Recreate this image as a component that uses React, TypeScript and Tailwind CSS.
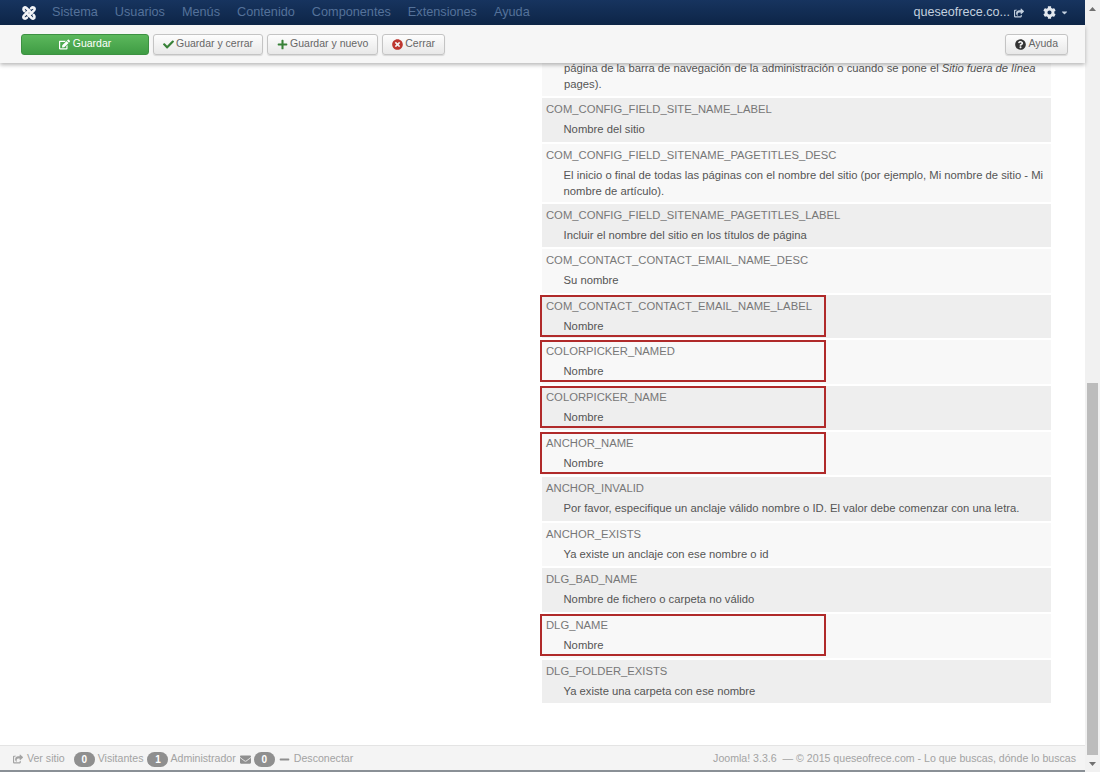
import { FaCaretDown, FaCheck, FaCog, FaEdit, FaEnvelope, FaMinus, FaPlus, FaQuestionCircle, FaShareSquare, FaTimesCircle } from "react-icons/fa";

const menu = ["Sistema", "Usuarios", "Menús", "Contenido", "Componentes", "Extensiones", "Ayuda"];

type Row = { label: string; value: React.ReactNode; marked?: boolean; tall?: boolean };

const rows: Row[] = [
  { label: "COM_CONFIG_FIELD_SITE_NAME_LABEL", value: "Nombre del sitio" },
  {
    label: "COM_CONFIG_FIELD_SITENAME_PAGETITLES_DESC",
    value: "El inicio o final de todas las páginas con el nombre del sitio (por ejemplo, Mi nombre de sitio - Mi nombre de artículo).",
    tall: true,
  },
  { label: "COM_CONFIG_FIELD_SITENAME_PAGETITLES_LABEL", value: "Incluir el nombre del sitio en los títulos de página" },
  { label: "COM_CONTACT_CONTACT_EMAIL_NAME_DESC", value: "Su nombre" },
  { label: "COM_CONTACT_CONTACT_EMAIL_NAME_LABEL", value: "Nombre", marked: true },
  { label: "COLORPICKER_NAMED", value: "Nombre", marked: true },
  { label: "COLORPICKER_NAME", value: "Nombre", marked: true },
  { label: "ANCHOR_NAME", value: "Nombre", marked: true },
  { label: "ANCHOR_INVALID", value: "Por favor, especifique un anclaje válido nombre o ID. El valor debe comenzar con una letra." },
  { label: "ANCHOR_EXISTS", value: "Ya existe un anclaje con ese nombre o id" },
  { label: "DLG_BAD_NAME", value: "Nombre de fichero o carpeta no válido" },
  { label: "DLG_NAME", value: "Nombre", marked: true },
  { label: "DLG_FOLDER_EXISTS", value: "Ya existe una carpeta con ese nombre" },
];

function JoomlaLogo() {
  return (
    <svg width="16" height="16" viewBox="0 0 16 16" fill="none" stroke="#f2f4f7" strokeWidth="2.6" strokeLinecap="round">
      <path d="M3.4 6 Q2 4.5 2.6 3.2 Q3.8 1.6 5.4 3 L10.6 8.2" />
      <path d="M10 3.4 Q11.5 2 12.8 2.6 Q14.4 3.8 13 5.4 L7.8 10.6" />
      <path d="M12.6 10 Q14 11.5 13.4 12.8 Q12.2 14.4 10.6 13 L5.4 7.8" />
      <path d="M6 12.6 Q4.5 14 3.2 13.4 Q1.6 12.2 3 10.6 L8.2 5.4" />
    </svg>
  );
}

function ToolButton({ icon, label }: { icon: React.ReactNode; label: string }) {
  return (
    <button className="flex h-[21px] items-center gap-[2px] rounded-[3px] border border-[#c4c4c4] bg-gradient-to-b from-[#fdfdfd] to-[#e8e8e8] px-[9px] text-[10.5px] text-[#666] shadow-[0_1px_1px_rgba(0,0,0,0.12)]">
      {icon}
      {label}
    </button>
  );
}

function Badge({ n }: { n: number }) {
  return (
    <span className="flex h-[15px] w-[21px] items-center justify-center rounded-full bg-[#8f8f8f] text-[10px] font-bold text-white">{n}</span>
  );
}

export default function App() {
  return (
    <div className="flex h-[772px] w-[1100px] overflow-hidden bg-white font-['Liberation_Sans',Arial,sans-serif]">
      <div className="flex min-w-0 flex-1 flex-col">
        {/* Top nav */}
        <nav className="z-20 flex h-[25px] shrink-0 items-center bg-gradient-to-b from-[#17345f] to-[#0d2547] pl-[21px] pr-[16px] text-[12.7px]">
          <JoomlaLogo />
          <ul className="ml-[15px] flex gap-[17px] text-[#55729a]">
            {menu.map((m) => (
              <li key={m}>{m}</li>
            ))}
          </ul>
          <span className="ml-auto text-[12.6px] text-[#c3d0df]">queseofrece.co...</span>
          <FaShareSquare className="ml-[4px] text-[10px] text-[#c3d0df]" />
          <FaCog className="ml-[19px] text-[13px] text-[#e3e8ee]" />
          <FaCaretDown className="ml-[4px] text-[9px] text-[#c3d0df]" />
        </nav>

        {/* Toolbar */}
        <div className="z-10 flex h-[38px] shrink-0 items-center gap-[4px] bg-[#f6f6f6] pl-[21px] pr-[17px] shadow-[0_2px_4px_rgba(0,0,0,0.28)]">
          <button className="flex h-[21px] w-[128px] items-center justify-center gap-[3px] rounded-[3px] border border-[#3d9142] bg-gradient-to-b from-[#5cb85c] to-[#3f9c44] text-[10.5px] text-white">
            <FaEdit className="text-[11px]" />
            Guardar
          </button>
          <ToolButton icon={<FaCheck className="text-[11px] text-[#378137]" />} label="Guardar y cerrar" />
          <ToolButton icon={<FaPlus className="text-[11px] text-[#378137]" />} label="Guardar y nuevo" />
          <ToolButton icon={<FaTimesCircle className="text-[11px] text-[#bd362f]" />} label="Cerrar" />
          <div className="ml-auto">
            <ToolButton icon={<FaQuestionCircle className="text-[11px] text-[#333]" />} label="Ayuda" />
          </div>
        </div>

        {/* Strings list */}
        <main className="min-h-0 flex-1 overflow-hidden">
          <div className="-mt-[3px] ml-[542px] w-[509px] text-[11.25px] leading-[16px]">
            <div className="mb-[2px] bg-[#f8f8f8] pb-[4px] pl-[22px] pr-[6px] text-[#555]">
              página de la barra de navegación de la administración o cuando se pone el <em>Sitio fuera de línea</em>
              <br />
              pages).
            </div>
            {rows.map((r, i) => (
              <div key={r.label} className={`relative mb-[2px] flex flex-col pl-[4px] pr-[6px] pt-[3px] ${i % 2 === 0 ? "bg-[#eeeeee]" : "bg-[#f8f8f8]"} ${r.tall ? "h-[58px]" : "h-[43.6px]"}`}>
                <div className="text-[#777]">{r.label}</div>
                <div className="mt-[4px] pl-[17.5px] text-[#555]">{r.value}</div>
                {r.marked && <div className="absolute -left-[2px] top-0 h-[42px] w-[286px] border-2 border-[#b02a2a]" />}
              </div>
            ))}
          </div>
        </main>

        {/* Footer */}
        <footer className="flex h-[27px] shrink-0 items-center border-t border-[#e4e4e4] bg-[#f4f4f4] pl-[13px] pr-[9px] text-[10.6px] text-[#a3a3a3] shadow-[inset_0_-2px_0_#8a9096]">
          <FaShareSquare className="text-[10px]" />
          <span className="ml-[4px]">Ver sitio</span>
          <span className="ml-[9px]"><Badge n={0} /></span>
          <span className="ml-[3px]">Visitantes</span>
          <span className="ml-[4px]"><Badge n={1} /></span>
          <span className="ml-[2px]">Administrador</span>
          <FaEnvelope className="ml-[4px] text-[11px] text-[#8f8f8f]" />
          <span className="ml-[3px]"><Badge n={0} /></span>
          <FaMinus className="ml-[4px] text-[11px] text-[#8f8f8f]" />
          <span className="ml-[4px]">Desconectar</span>
          <span className="ml-auto">Joomla! 3.3.6 &nbsp;— © 2015 queseofrece.com - Lo que buscas, dónde lo buscas</span>
        </footer>
      </div>

      {/* Scrollbar */}
      <div className="flex w-[15px] shrink-0 flex-col bg-[#f1f1f1]">
        <div className="flex h-[17px] items-center justify-center">
          <svg width="7" height="4" viewBox="0 0 7 4"><path d="M3.5 0L7 4H0z" fill="#707070" /></svg>
        </div>
        <div className="h-[366px]" />
        <div className="mx-[2px] h-[372px] bg-[#bcbcbc]" />
        <div className="flex h-[17px] items-center justify-center">
          <svg width="7" height="4" viewBox="0 0 7 4"><path d="M3.5 4L7 0H0z" fill="#707070" /></svg>
        </div>
      </div>
    </div>
  );
}
